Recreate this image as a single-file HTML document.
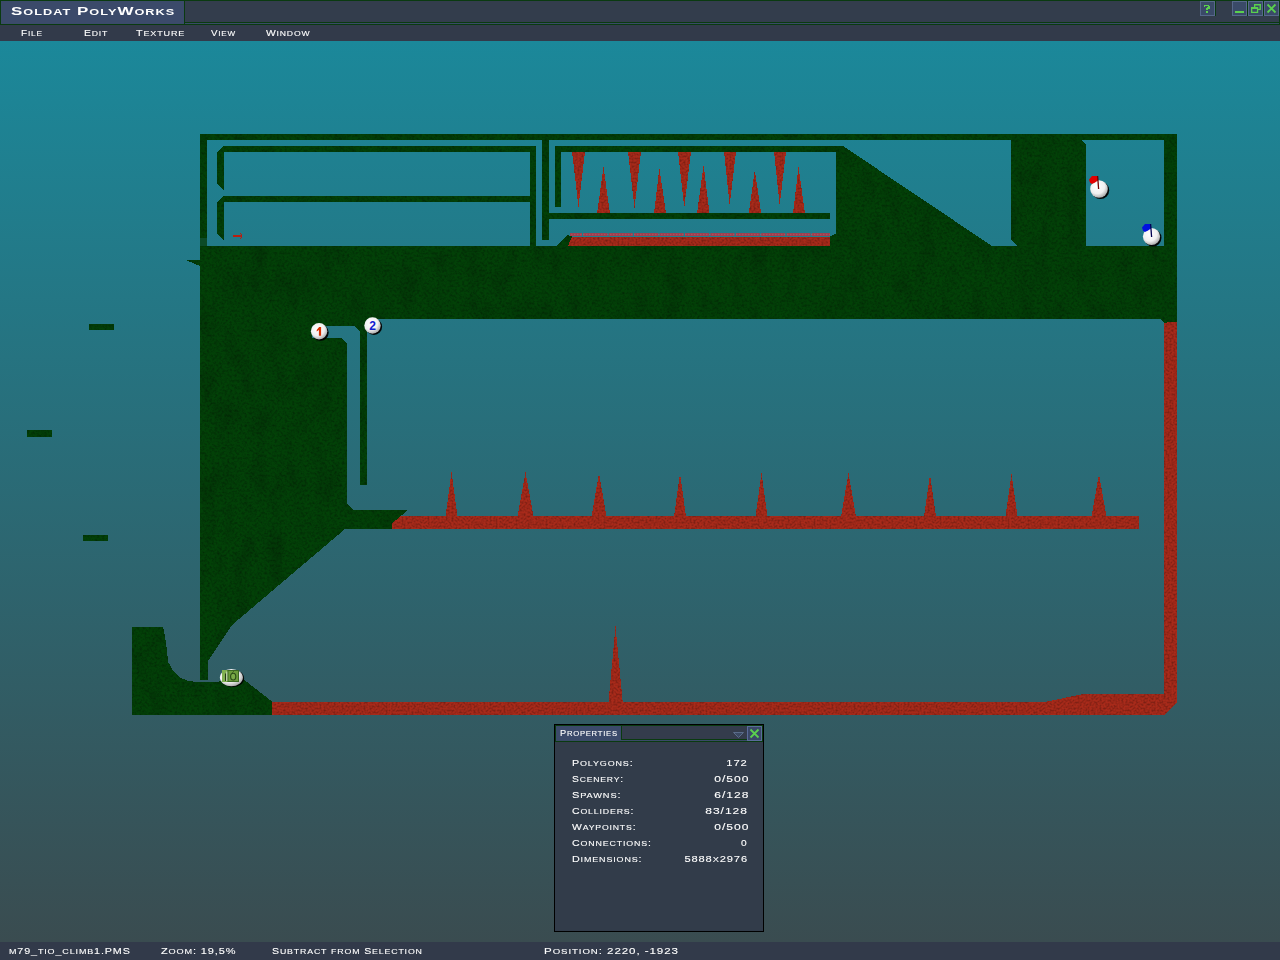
<!DOCTYPE html>
<html><head><meta charset="utf-8">
<style>
html,body{margin:0;padding:0;width:1280px;height:960px;overflow:hidden;background:#323a4a;}
body{position:relative;font-family:"Liberation Sans",sans-serif;color:#fff;}
.a{position:absolute;}
.tx{position:absolute;white-space:nowrap;line-height:1;letter-spacing:0.7px;-webkit-text-stroke:0.1px #fff;}
.tx span{line-height:1;}
#view{position:absolute;left:0;top:41px;width:1280px;height:901px;background:linear-gradient(#1b889a,#3a4c50);}
</style></head><body>
<div class="a" style="left:0px;top:0px;width:1280px;height:25px;background:#333d4c;"></div>
<div class="a" style="left:0px;top:0px;width:1280px;height:1px;background:#0a3a10;"></div>
<div class="a" style="left:0px;top:0px;width:1px;height:25px;background:#0a3a10;"></div>
<div class="a" style="left:1px;top:1px;width:183px;height:23px;background:#3b4a6a;"></div>
<div class="a" style="left:184px;top:1px;width:1px;height:23px;background:#0a3a10;"></div>
<div class="a" style="left:184px;top:22px;width:1096px;height:1px;background:#0a3a10;"></div>
<div class="a" style="left:185px;top:23px;width:1095px;height:1px;background:#3a4a68;"></div>
<div class="a" style="left:0px;top:24px;width:1280px;height:1px;background:#0a3a10;"></div>
<div class="a" style="left:1279px;top:0px;width:1px;height:25px;background:#0a3a10;"></div>
<div id="title" class="tx" style="left:10.60px;top:5.15px;font-size:11.63px;font-weight:bold;color:#ffffff;transform:scaleX(1.4580);transform-origin:0 0;-webkit-text-stroke:0;">S<span style="font-size:8.72px">OLDAT</span> P<span style="font-size:8.72px">OLY</span>W<span style="font-size:8.72px">ORKS</span></div>
<div class="a" style="left:1200px;top:1px;width:13px;height:13px;background:#3a4a68;border:1px solid #56688a;"></div>
<div class="a" style="left:1232px;top:1px;width:13px;height:13px;background:#3a4a68;border:1px solid #56688a;"></div>
<div class="a" style="left:1248px;top:1px;width:13px;height:13px;background:#3a4a68;border:1px solid #56688a;"></div>
<div class="a" style="left:1264px;top:1px;width:13px;height:13px;background:#3a4a68;border:1px solid #56688a;"></div>
<div class="a" style="left:1215px;top:1px;width:1px;height:15px;background:#0a3a10;"></div>
<div class="a" style="left:1247px;top:1px;width:1px;height:15px;background:#0a3a10;"></div>
<div class="a" style="left:1263px;top:1px;width:1px;height:15px;background:#0a3a10;"></div>
<svg class="a" style="left:0;top:0" width="1280" height="25">
 <g fill="#5ad04e">
  <path d="M1204,5h5v1h1v3h-2v1h-2v-2h1v-1h1v-1h-3v1h-1z M1206,11h2v2h-2z"/>
  <rect x="1235" y="11" width="9" height="2"/>
 </g>
 <g fill="none" stroke="#5ad04e" stroke-width="1.2">
  <path d="M1254,4h7v1.6h-7z M1254,4h1.3v3h-1.3z M1259.6,4h1.3v6h-1.3z M1258,8.7h2.9v1.3h-2.9z M1251,7h7.2v2h-7.2z M1251,7h1.3v6h-1.3z M1256.9,7h1.3v6h-1.3z M1251,11.7h7.2v1.3h-7.2z" fill="#5ad04e" stroke="none"/>
  <path d="M1267.5,4.5L1275.5,12.5M1275.5,4.5L1267.5,12.5" stroke-width="1.8"/>
 </g>
</svg>
<div class="a" style="left:0px;top:25px;width:1280px;height:16px;background:#323a4a;"></div>
<div id="m1" class="tx" style="left:21.20px;top:28.61px;font-size:8.72px;font-weight:normal;color:#ffffff;transform:scaleX(1.1452);transform-origin:0 0;">F<span style="font-size:7.27px">ILE</span></div>
<div id="m2" class="tx" style="left:84.40px;top:28.61px;font-size:8.72px;font-weight:normal;color:#ffffff;transform:scaleX(1.1932);transform-origin:0 0;">E<span style="font-size:7.27px">DIT</span></div>
<div id="m3" class="tx" style="left:136.00px;top:28.61px;font-size:8.72px;font-weight:normal;color:#ffffff;transform:scaleX(1.2404);transform-origin:0 0;">T<span style="font-size:7.27px">EXTURE</span></div>
<div id="m4" class="tx" style="left:211.40px;top:28.61px;font-size:8.72px;font-weight:normal;color:#ffffff;transform:scaleX(1.1161);transform-origin:0 0;">V<span style="font-size:7.27px">IEW</span></div>
<div id="m5" class="tx" style="left:265.60px;top:28.61px;font-size:8.72px;font-weight:normal;color:#ffffff;transform:scaleX(1.1844);transform-origin:0 0;">W<span style="font-size:7.27px">INDOW</span></div>
<div id="view"></div>
<svg class="a" style="left:0;top:0" width="1280" height="942">
<defs><filter id="tex" filterUnits="userSpaceOnUse" x="0" y="0" width="1280" height="942" color-interpolation-filters="sRGB">
<feTurbulence type="fractalNoise" baseFrequency="0.4" numOctaves="3" seed="7" result="n"/>
<feColorMatrix in="n" type="matrix" values="0.65 0 0 0 0.6  0.65 0 0 0 0.6  0.65 0 0 0 0.6  0 0 0 0 1" result="g"/>
<feTurbulence type="fractalNoise" baseFrequency="0.06 0.03" numOctaves="3" seed="3" result="n2"/>
<feColorMatrix in="n2" type="matrix" values="0.35 0 0 0 0.8  0.35 0 0 0 0.8  0.35 0 0 0 0.8  0 0 0 0 1" result="g2"/>
<feBlend in="g" in2="g2" mode="multiply" result="gg"/>
<feBlend in="SourceGraphic" in2="gg" mode="multiply" result="b"/>
<feComposite in="b" in2="SourceGraphic" operator="in"/>
</filter>
<filter id="texr" filterUnits="userSpaceOnUse" x="0" y="0" width="1280" height="942" color-interpolation-filters="sRGB">
<feTurbulence type="fractalNoise" baseFrequency="0.5" numOctaves="3" seed="11" result="n"/>
<feColorMatrix in="n" type="matrix" values="0.65 0 0 0 0.6  0.65 0 0 0 0.6  0.65 0 0 0 0.6  0 0 0 0 1" result="g"/>
<feBlend in="SourceGraphic" in2="g" mode="multiply" result="b"/>
<feComposite in="b" in2="SourceGraphic" operator="in"/>
</filter></defs>
<path filter="url(#texr)" shape-rendering="crispEdges" fill="#a82a1a" d="M1164,322H1177V702.5L1164.5,715H272V702H1044.6L1083.3,694H1164Z M397,516H1139V529H390V520Z M572,237H830V246H566V240Z M608.5,702L615.5,626L622.7,702Z M445.5,516.5L451.5,472L457.5,516.5Z M517.5,516.5L525.5,472L533.5,516.5Z M591.5,516.5L599,473L606.5,516.5Z M674.0,516.5L680,473L686.0,516.5Z M755.5,516.5L761.5,473L767.5,516.5Z M841.0,516.5L848.5,473L856.0,516.5Z M924.0,516.5L930,474.5L936.0,516.5Z M1005.5,516.5L1011.5,474L1017.5,516.5Z M1091.5,516.5L1099,474L1106.5,516.5Z M597,213.5L603.5,167L610,213.5Z M654,213.5L659.4,168L666,213.5Z M697,213.5L703.6,165L709.6,213.5Z M748.8,213.5L754.8,170L761.2,213.5Z M793,213.5L798.5,166.8L805,213.5Z M572,151.5L578.5,207L585,151.5Z M628,151.5L634.5,208L641,151.5Z M678,151.5L684.3,207.6L691,151.5Z M724,151.5L729.7,205.5L736,151.5Z M774,151.5L779.7,205.5L786,151.5Z"/>
<path filter="url(#tex)" shape-rendering="crispEdges" fill="#024107" d="M200,134H1177V140H200Z M200,134H207V246H200Z M217,152.5L223.5,146H536V246H530V152H224V190L217,183.5Z M217,202.5L223.5,196H530V202H224V240L217,233.5Z M542,140H549V240H542Z M555,146H843L992,246H830V236.5L836,233.5V152H561V207H555Z M549,213H830V219H549Z M1011,140H1081L1086,145V246H1017L1011,240Z M1164,134H1177V322H1164Z M200,246H556L568,235L572,236.5L568,246H1177V321L1164,323L1160,319H367V485H360V332L354,326H311.5V338H341L347,344V503L353,510H408L392,523.4V529H345L232,625L208,661V680H200V266L186,260H200Z M132,627H163L165,636L166.6,648L168.2,662L173.2,670.8L179.7,677.4L188.5,681.2L200,682H218L231,676L243,679L272,701.5V715H132Z M89,324h25v6h-25z M27,430h25v7h-25z M83,535h25v6h-25z"/>
<rect x="200" y="238" width="7" height="8" fill="#0c4b28"/>
<path d="M570,234.5H830" stroke="#9c4050" stroke-width="3" stroke-dasharray="24,1.4" stroke-dashoffset="12" fill="none"/>
<path d="M571,234.5H830" stroke="#b85262" stroke-width="1.5" stroke-dasharray="1.5,1.5" fill="none" opacity="0.7"/>
<g fill="#b82010" shape-rendering="crispEdges"><rect x="233" y="235" width="9" height="2"/><rect x="241" y="234" width="1" height="4"/><rect x="240" y="233" width="1" height="1"/><rect x="240" y="238" width="1" height="1"/></g>
<defs>
<radialGradient id="bw" cx="0.4" cy="0.35" r="0.7"><stop offset="0" stop-color="#ffffff"/><stop offset="0.6" stop-color="#f0f0f0"/><stop offset="1" stop-color="#a0a0a0"/></radialGradient>
</defs>
<circle cx="320.5" cy="332.6" r="8.2" fill="#000" opacity="0.95"/>
<circle cx="319.1" cy="331.3" r="8.2" fill="url(#bw)"/>
<path d="M316.70000000000005,330.1L319.1,327.0H321.1V335.8H318.90000000000003V330.0L316.70000000000005,331.5Z" fill="#d83000"/>
<circle cx="373.9" cy="326.8" r="8.2" fill="#000" opacity="0.95"/>
<circle cx="372.5" cy="325.5" r="8.2" fill="url(#bw)"/>
<text x="372.5" y="329.8" text-anchor="middle" font-family="Liberation Sans" font-weight="bold" font-size="12" fill="#1020d0">2</text>
<circle cx="1100.4" cy="190.3" r="8.8" fill="#000" opacity="0.95"/>
<circle cx="1099" cy="189" r="8.8" fill="url(#bw)"/>
<g transform="translate(-53,-48)"><path d="M1142,227.5L1145,224H1151V228.5L1148,230.5L1145,232L1143,230.5Z" fill="#e00000"/><path d="M1150.6,224L1151.6,237" stroke="#700000" stroke-width="1.3"/></g>
<circle cx="1152.9" cy="237.8" r="8.6" fill="#000" opacity="0.95"/>
<circle cx="1151.5" cy="236.5" r="8.6" fill="url(#bw)"/>
<g transform="translate(0,0)"><path d="M1142,227.5L1145,224H1151V228.5L1148,230.5L1145,232L1143,230.5Z" fill="#0010e0"/><path d="M1150.6,224L1151.6,237" stroke="#000050" stroke-width="1.3"/></g>
<ellipse cx="232.6" cy="678.4" rx="11.5" ry="8.6" fill="#000" opacity="0.9"/>
<ellipse cx="231.4" cy="677.6" rx="11.5" ry="8.7" fill="url(#bw)"/>
<rect x="222" y="670" width="17" height="12" fill="#6c9c3c"/>
<rect x="222" y="670" width="5" height="12" fill="#80b050"/>
<path d="M225.5,673.5V681" stroke="#1a2a10" stroke-width="0.9"/>
<path d="M227,681V671.5" stroke="#f0f0f0" stroke-width="1"/>
<rect x="228" y="670.5" width="10.5" height="11" fill="#6c9c3c" stroke="#3c6a22" stroke-width="1"/>
<ellipse cx="233.2" cy="676.6" rx="2.6" ry="3.4" fill="#7aaa48" stroke="#2a4a18" stroke-width="1.1"/>
<path d="M232.4,672.6L233.6,671.4" stroke="#2a4a18" stroke-width="1"/>
</svg>
<div class="a" style="left:0px;top:942px;width:1280px;height:18px;background:#323a4a;"></div>
<div id="s1" class="tx" style="left:9.00px;top:946.61px;font-size:8.72px;font-weight:normal;color:#ffffff;transform:scaleX(1.2347);transform-origin:0 0;"><span style="font-size:7.27px">M</span>79_<span style="font-size:7.27px">TIO</span>_<span style="font-size:7.27px">CLIMB</span>1.PMS</div>
<div id="s2" class="tx" style="left:161.00px;top:946.61px;font-size:8.72px;font-weight:normal;color:#ffffff;transform:scaleX(1.2558);transform-origin:0 0;">Z<span style="font-size:7.27px">OOM</span>: 19,5%</div>
<div id="s3" class="tx" style="left:271.80px;top:946.61px;font-size:8.72px;font-weight:normal;color:#ffffff;transform:scaleX(1.2097);transform-origin:0 0;">S<span style="font-size:7.27px">UBTRACT</span> <span style="font-size:7.27px">FROM</span> S<span style="font-size:7.27px">ELECTION</span></div>
<div id="s4" class="tx" style="left:544.00px;top:946.61px;font-size:8.72px;font-weight:normal;color:#ffffff;transform:scaleX(1.3258);transform-origin:0 0;">P<span style="font-size:7.27px">OSITION</span>: 2220, -1923</div>
<div class="a" style="left:554px;top:724px;width:208px;height:206px;background:#323c4a;border:1px solid #000;"></div>
<div class="a" style="left:555px;top:725px;width:208px;height:1px;background:#0a3a10;"></div>
<div class="a" style="left:555px;top:725px;width:1px;height:17px;background:#0a3a10;"></div>
<div class="a" style="left:762px;top:725px;width:1px;height:17px;background:#0a3a10;"></div>
<div class="a" style="left:556px;top:726px;width:65px;height:15px;background:#3b4a6a;"></div>
<div class="a" style="left:621px;top:726px;width:1px;height:14px;background:#0a3a10;"></div>
<div class="a" style="left:622px;top:726px;width:125px;height:13px;background:#343c4c;"></div>
<div class="a" style="left:621px;top:739px;width:126px;height:1px;background:#0a3a10;"></div>
<div class="a" style="left:556px;top:740px;width:206px;height:1px;background:#3a4a68;"></div>
<div class="a" style="left:555px;top:741px;width:208px;height:1px;background:#0a3a10;"></div>
<div class="a" style="left:747px;top:726px;width:13px;height:13px;background:#3a4868;border:1px solid #5a6c9a;"></div>
<svg class="a" style="left:0;top:0;overflow:visible" width="1" height="1">
 <path d="M733.5,732.5H743.5L738.5,737.5Z" fill="#3c4a64" stroke="#5a6c8a" stroke-width="1"/>
 <path d="M750.5,729.5L758.5,737.5M758.5,729.5L750.5,737.5" stroke="#5ad04e" stroke-width="1.8" fill="none"/>
</svg>
<div id="ptitle" class="tx" style="left:559.80px;top:728.61px;font-size:8.72px;font-weight:normal;color:#ffffff;transform:scaleX(1.0566);transform-origin:0 0;">P<span style="font-size:7.27px">ROPERTIES</span></div>
<div id="l0" class="tx" style="left:571.60px;top:758.61px;font-size:8.72px;font-weight:normal;color:#ffffff;transform:scaleX(1.2322);transform-origin:0 0;">P<span style="font-size:7.27px">OLYGONS</span>:</div>
<div id="v0" class="tx" style="right:532.00px;top:758.61px;font-size:8.72px;font-weight:normal;color:#ffffff;transform:scaleX(1.2830);transform-origin:100% 0;">172</div>
<div id="l1" class="tx" style="left:571.60px;top:774.61px;font-size:8.72px;font-weight:normal;color:#ffffff;transform:scaleX(1.1801);transform-origin:0 0;">S<span style="font-size:7.27px">CENERY</span>:</div>
<div id="v1" class="tx" style="right:531.00px;top:774.61px;font-size:8.72px;font-weight:normal;color:#ffffff;transform:scaleX(1.3852);transform-origin:100% 0;">0/500</div>
<div id="l2" class="tx" style="left:571.60px;top:790.61px;font-size:8.72px;font-weight:normal;color:#ffffff;transform:scaleX(1.2671);transform-origin:0 0;">S<span style="font-size:7.27px">PAWNS</span>:</div>
<div id="v2" class="tx" style="right:531.00px;top:790.61px;font-size:8.72px;font-weight:normal;color:#ffffff;transform:scaleX(1.3828);transform-origin:100% 0;">6/128</div>
<div id="l3" class="tx" style="left:571.60px;top:806.61px;font-size:8.72px;font-weight:normal;color:#ffffff;transform:scaleX(1.2065);transform-origin:0 0;">C<span style="font-size:7.27px">OLLIDERS</span>:</div>
<div id="v3" class="tx" style="right:532.00px;top:806.61px;font-size:8.72px;font-weight:normal;color:#ffffff;transform:scaleX(1.3787);transform-origin:100% 0;">83/128</div>
<div id="l4" class="tx" style="left:571.60px;top:822.61px;font-size:8.72px;font-weight:normal;color:#ffffff;transform:scaleX(1.1948);transform-origin:0 0;">W<span style="font-size:7.27px">AYPOINTS</span>:</div>
<div id="v4" class="tx" style="right:531.00px;top:822.61px;font-size:8.72px;font-weight:normal;color:#ffffff;transform:scaleX(1.3852);transform-origin:100% 0;">0/500</div>
<div id="l5" class="tx" style="left:571.60px;top:838.61px;font-size:8.72px;font-weight:normal;color:#ffffff;transform:scaleX(1.2184);transform-origin:0 0;">C<span style="font-size:7.27px">ONNECTIONS</span>:</div>
<div id="v5" class="tx" style="right:532.00px;top:838.61px;font-size:8.72px;font-weight:normal;color:#ffffff;transform:scaleX(1.1677);transform-origin:100% 0;">0</div>
<div id="l6" class="tx" style="left:571.60px;top:854.61px;font-size:8.72px;font-weight:normal;color:#ffffff;transform:scaleX(1.2307);transform-origin:0 0;">D<span style="font-size:7.27px">IMENSIONS</span>:</div>
<div id="v6" class="tx" style="right:532.00px;top:854.61px;font-size:8.72px;font-weight:normal;color:#ffffff;transform:scaleX(1.2711);transform-origin:100% 0;">5888<span style="font-size:7.27px">X</span>2976</div>
</body></html>
